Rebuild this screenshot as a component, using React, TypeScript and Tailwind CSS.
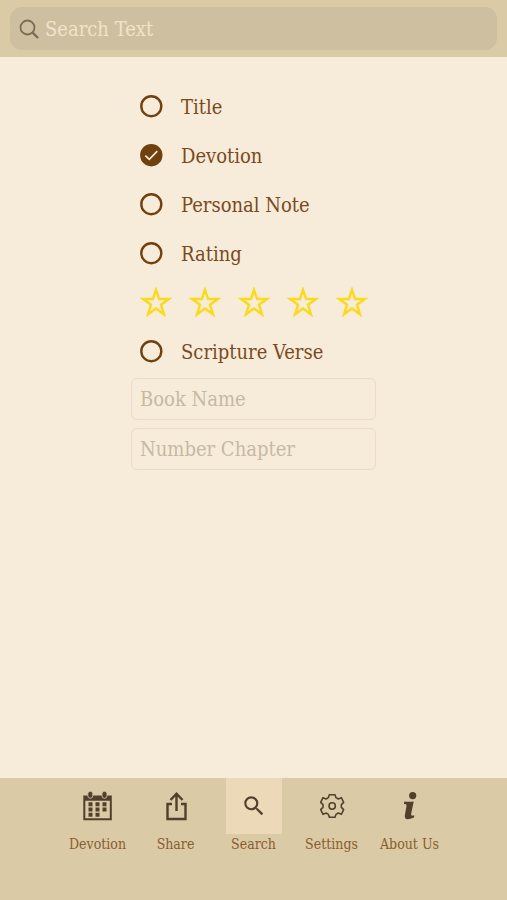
import React, { useState } from 'react';
import { MdSearch } from 'react-icons/md';

const fields = ['Title', 'Devotion', 'Personal Note', 'Rating', 'Scripture Verse'];

interface FieldOptionProps {
  label: string;
  checked: boolean;
  onSelect: () => void;
}

const FieldOption: React.FC<FieldOptionProps> = ({ label, checked, onSelect }) => (
  <label className="flex h-[49px] cursor-pointer items-center gap-[17px] pl-[9px] text-xl text-[#7a4a1e]">
    <span className="grid shrink-0 place-items-center">
      <input
        type="radio"
        name="field"
        checked={checked}
        onChange={onSelect}
        className="col-start-1 row-start-1 size-6 appearance-none rounded-full"
      />
      <svg viewBox="0 0 24 24" className="pointer-events-none col-start-1 row-start-1 size-6" fill="none">
        <circle cx="11.3" cy="11.2" r="10" fill={checked ? '#70400f' : 'none'} stroke="#70400f" strokeWidth="2.4" />
        {checked && <path d="M5.300 11.600 9.300 15.300 17.300 7.200" stroke="#f7ecd9" strokeWidth="1.7" />}
      </svg>
    </span>
    <span>{label}</span>
  </label>
);

const CalendarIcon = () => (
  <svg viewBox="0 0 30 30" className="size-[30px]" fill="currentColor">
    <path fillRule="evenodd" d="M0.300 4.500h28.500V29.300H0.300zM2.300 9.800v17.500h24.500V9.800z" />
    <g stroke="#dacaa6" strokeWidth="0.800">
      <rect x="4.800" y="0.300" width="5" height="7" rx="2.500" />
      <rect x="19" y="0.300" width="5" height="7" rx="2.500" />
    </g>
    <path d="M5.500 11.200h4v4h-4zM12.500 11.200h4v4h-4zM19.500 11.200h4v4h-4zM5.500 16.500h4v4h-4zM12.500 16.500h4v4h-4zM19.500 16.500h4v4h-4zM5.500 21.800h4v4h-4zM12.500 21.800h4v4h-4z" />
  </svg>
);

const ShareIcon = () => (
  <svg viewBox="0 0 30 30" className="size-[30px]" fill="none" stroke="currentColor" strokeWidth="2.400">
    <path d="M11 13H6.500V28h18V13H20M15.500 20V3M9.500 9l6-6.300 6 6.300" />
  </svg>
);

const GearIcon = () => (
  <svg viewBox="18 18 84 84" className="size-7" fill="none" stroke="currentColor" strokeWidth="4.600" strokeLinejoin="round">
    <path d="M52 26H69L72 35 79 39 88 35 95 49 88 56V64L95 71 88 85 79 81 72 85 69 94H52L49 85 42 81 33 85 26 71 33 64V56L26 49 33 35 42 39 49 35Z" />
    <circle cx="60.500" cy="60" r="9.500" />
  </svg>
);

const InfoIcon = () => (
  <svg viewBox="0 0 30 30" className="size-[30px]" fill="currentColor">
    <circle cx="17.700" cy="4.600" r="3.600" />
    <path d="M9.300 10.400Q15 11 18.700 10.400L16.200 22.500Q15.600 25.600 19.300 24.200L19 26.400Q8.800 31 9.900 24L11.600 14.600Q11.800 13 9 13z" />
  </svg>
);

const tabs = [
  { label: 'Devotion', icon: <CalendarIcon /> },
  { label: 'Share', icon: <ShareIcon /> },
  { label: 'Search', icon: <MdSearch className="size-[26px]" /> },
  { label: 'Settings', icon: <GearIcon /> },
  { label: 'About Us', icon: <InfoIcon /> },
];

const App: React.FC = () => {
  const [field, setField] = useState('Devotion');
  const [rating, setRating] = useState(0);

  const renderOption = (name: string) => (
    <FieldOption key={name} label={name} checked={field === name} onSelect={() => setField(name)} />
  );

  return (
    <div className="flex min-h-screen flex-col bg-[#f7ecd9] font-['DejaVu_Serif_Condensed','DejaVu_Serif',serif]">
      <header className="bg-[#dbcaa6] px-[10px] py-[7px]">
        <label className="flex h-[43px] items-center gap-[6px] rounded-xl bg-[#cfbfa1] px-[9px]">
          <svg viewBox="0 0 20 20" className="size-5 shrink-0" fill="none" stroke="#7d6c55" strokeWidth="1.800">
            <circle cx="8.500" cy="8.500" r="7" />
            <path d="M13.500 13.500 19 19" strokeWidth="2.400" />
          </svg>
          <input
            type="search"
            aria-label="Search Text"
            placeholder="Search Text"
            className="min-w-0 flex-1 bg-transparent text-xl text-[#7a4a1e] outline-none placeholder:text-[#efe4c9]"
          />
        </label>
      </header>

      {/* Search criteria */}
      <main className="mx-auto w-[245px] flex-1 pt-[25px]">
        {fields.slice(0, 4).map(renderOption)}
        <div className="grid h-[49px] grid-cols-5 items-center" role="group" aria-label="Rating">
          {[1, 2, 3, 4, 5].map((n) => (
            <button key={n} type="button" aria-label={`${n} stars`} onClick={() => setRating(n)} className="flex justify-center">
              <svg viewBox="0 0 32 32" className="size-8" fill={n <= rating ? '#fbd91c' : 'none'} stroke="#fbd91c" strokeWidth="2.400">
                <path d="M16 2.800 19.100 12H28.800L21 17.700 24 27.300 16 21.500 8 27.300 11 17.700 3.200 12H12.900z" />
              </svg>
            </button>
          ))}
        </div>
        {renderOption(fields[4])}
        <div className="flex flex-col gap-2 pt-[2px]">
          <input
            type="text"
            aria-label="Book Name"
            placeholder="Book Name"
            className="h-[42px] w-full rounded-md border border-[#e9dcc9] px-2 text-xl text-[#7a4a1e] outline-none placeholder:text-[#c5b9a5]"
          />
          <input
            type="text"
            aria-label="Number Chapter"
            placeholder="Number Chapter"
            className="h-[42px] w-full rounded-md border border-[#e9dcc9] px-2 text-xl text-[#7a4a1e] outline-none placeholder:text-[#c5b9a5]"
          />
        </div>
      </main>

      {/* Bottom tab bar */}
      <nav className="flex h-[122px] justify-center bg-[#dacaa6]">
        {tabs.map(({ label, icon }) => (
          <a key={label} href="#" className="flex w-[78px] flex-col items-center text-[#50402c]">
            <span className={`flex size-14 items-center justify-center ${label === 'Search' ? 'bg-[#ebd9b8]' : ''}`}>{icon}</span>
            <span className="text-sm whitespace-nowrap text-[#8a5c2e]">{label}</span>
          </a>
        ))}
      </nav>
    </div>
  );
};

export default App;
